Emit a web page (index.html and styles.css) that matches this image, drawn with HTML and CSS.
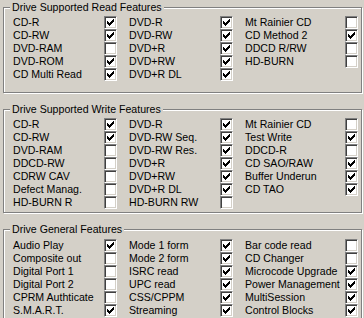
FILE: index.html
```html
<!DOCTYPE html>
<html lang="en">
<head>
    <meta charset="UTF-8">
    <title>Drive Features</title>
    <link rel="stylesheet" href="styles.css">
</head>
<body>
    <div class="group group-read">
        <div class="group-title">Drive Supported Read Features</div>
        <div class="feature-grid" id="readGrid"></div>
    </div>
    <div class="group group-write">
        <div class="group-title">Drive Supported Write Features</div>
        <div class="feature-grid" id="writeGrid"></div>
    </div>
    <div class="group group-general">
        <div class="group-title">Drive General Features</div>
        <div class="feature-grid" id="generalGrid"></div>
    </div>
    <script>
        // 每行三项: [名称, 是否支持]
        const readRows = [
            [['CD-R', 1], ['DVD-R', 1], ['Mt Rainier CD', 0]],
            [['CD-RW', 1], ['DVD-RW', 1], ['CD Method 2', 1]],
            [['DVD-RAM', 0], ['DVD+R', 1], ['DDCD R/RW', 0]],
            [['DVD-ROM', 1], ['DVD+RW', 1], ['HD-BURN', 0]],
            [['CD Multi Read', 1], ['DVD+R DL', 1], null]
        ];
        const writeRows = [
            [['CD-R', 1], ['DVD-R', 1], ['Mt Rainier CD', 0]],
            [['CD-RW', 1], ['DVD-RW Seq.', 1], ['Test Write', 1]],
            [['DVD-RAM', 0], ['DVD-RW Res.', 1], ['DDCD-R', 0]],
            [['DDCD-RW', 0], ['DVD+R', 1], ['CD SAO/RAW', 1]],
            [['CDRW CAV', 0], ['DVD+RW', 1], ['Buffer Underun', 1]],
            [['Defect Manag.', 0], ['DVD+R DL', 1], ['CD TAO', 1]],
            [['HD-BURN R', 0], ['HD-BURN RW', 0], null]
        ];
        const generalRows = [
            [['Audio Play', 1], ['Mode 1 form', 1], ['Bar code read', 0]],
            [['Composite out', 0], ['Mode 2 form', 1], ['CD Changer', 0]],
            [['Digital Port 1', 0], ['ISRC read', 1], ['Microcode Upgrade', 1]],
            [['Digital Port 2', 0], ['UPC read', 1], ['Power Management', 1]],
            [['CPRM Authticate', 0], ['CSS/CPPM', 1], ['MultiSession', 1]],
            [['S.M.A.R.T.', 1], ['Streaming', 1], ['Control Blocks', 1]]
        ];

        const CHECK = '<svg class="tick" width="7" height="7" viewBox="0 0 7 7" shape-rendering="crispEdges">' +
            '<path d="M0 2h1v3h-1zM1 3h1v3h-1zM2 4h1v3h-1zM3 3h1v3h-1zM4 2h1v3h-1zM5 1h1v3h-1zM6 0h1v3h-1z" fill="#000"/></svg>';

        function fill(id, rows) {
            const grid = document.getElementById(id);
            let html = '';
            rows.forEach(row => {
                row.forEach(item => {
                    if (!item) {
                        html += '<span></span><span></span>';
                        return;
                    }
                    html += '<span class="label">' + item[0] + '</span>';
                    html += '<span class="box">' + (item[1] ? CHECK : '') + '</span>';
                });
            });
            grid.innerHTML = html;
        }
        fill('readGrid', readRows);
        fill('writeGrid', writeRows);
        fill('generalGrid', generalRows);
    </script>
</body>
</html>
```
FILE: styles.css
```css
html, body {
    margin: 0;
    padding: 0;
    width: 364px;
    height: 318px;
    overflow: hidden;
    background: #d4d0c8;
    font-family: 'Liberation Sans', Arial, sans-serif;
    font-size: 10.6px;
    color: #000;
}
/* 分组框 (etched) */
.group {
    box-sizing: border-box;
    width: 359px;
    margin: 7px 0 0 3px;
    border: 1px solid #808080;
    box-shadow: 1px 1px 0 #fff, inset 1px 1px 0 #fff;
}
.group-read {
    height: 86px;
}
.group-write {
    height: 104px;
    margin-top: 16px;
}
/* 最后一组被窗口底部截断 */
.group-general {
    height: 89px;
    margin-top: 16px;
    border-bottom: none;
}
.group-title {
    display: table;
    margin: -7px 0 0 6px;
    padding: 0 2px;
    height: 13px;
    line-height: 13px;
    background: #d4d0c8;
}
.feature-grid {
    display: grid;
    grid-template-columns: 91px 25px 91px 25px 100px 13px;
    grid-auto-rows: 13px;
    margin: 2px 0 0 9px;
}
.group-general .feature-grid {
    margin-top: 3px;
}
.feature-grid .label {
    line-height: 13px;
    white-space: nowrap;
}
.box {
    box-sizing: border-box;
    width: 13px;
    height: 13px;
    background: #fff;
    border: 1px solid;
    border-color: #808080 #fff #fff #808080;
    box-shadow: inset 1px 1px 0 #404040, inset -1px -1px 0 #d4d0c8;
}
.tick {
    display: block;
    margin: 2px 0 0 2px;
}
```
